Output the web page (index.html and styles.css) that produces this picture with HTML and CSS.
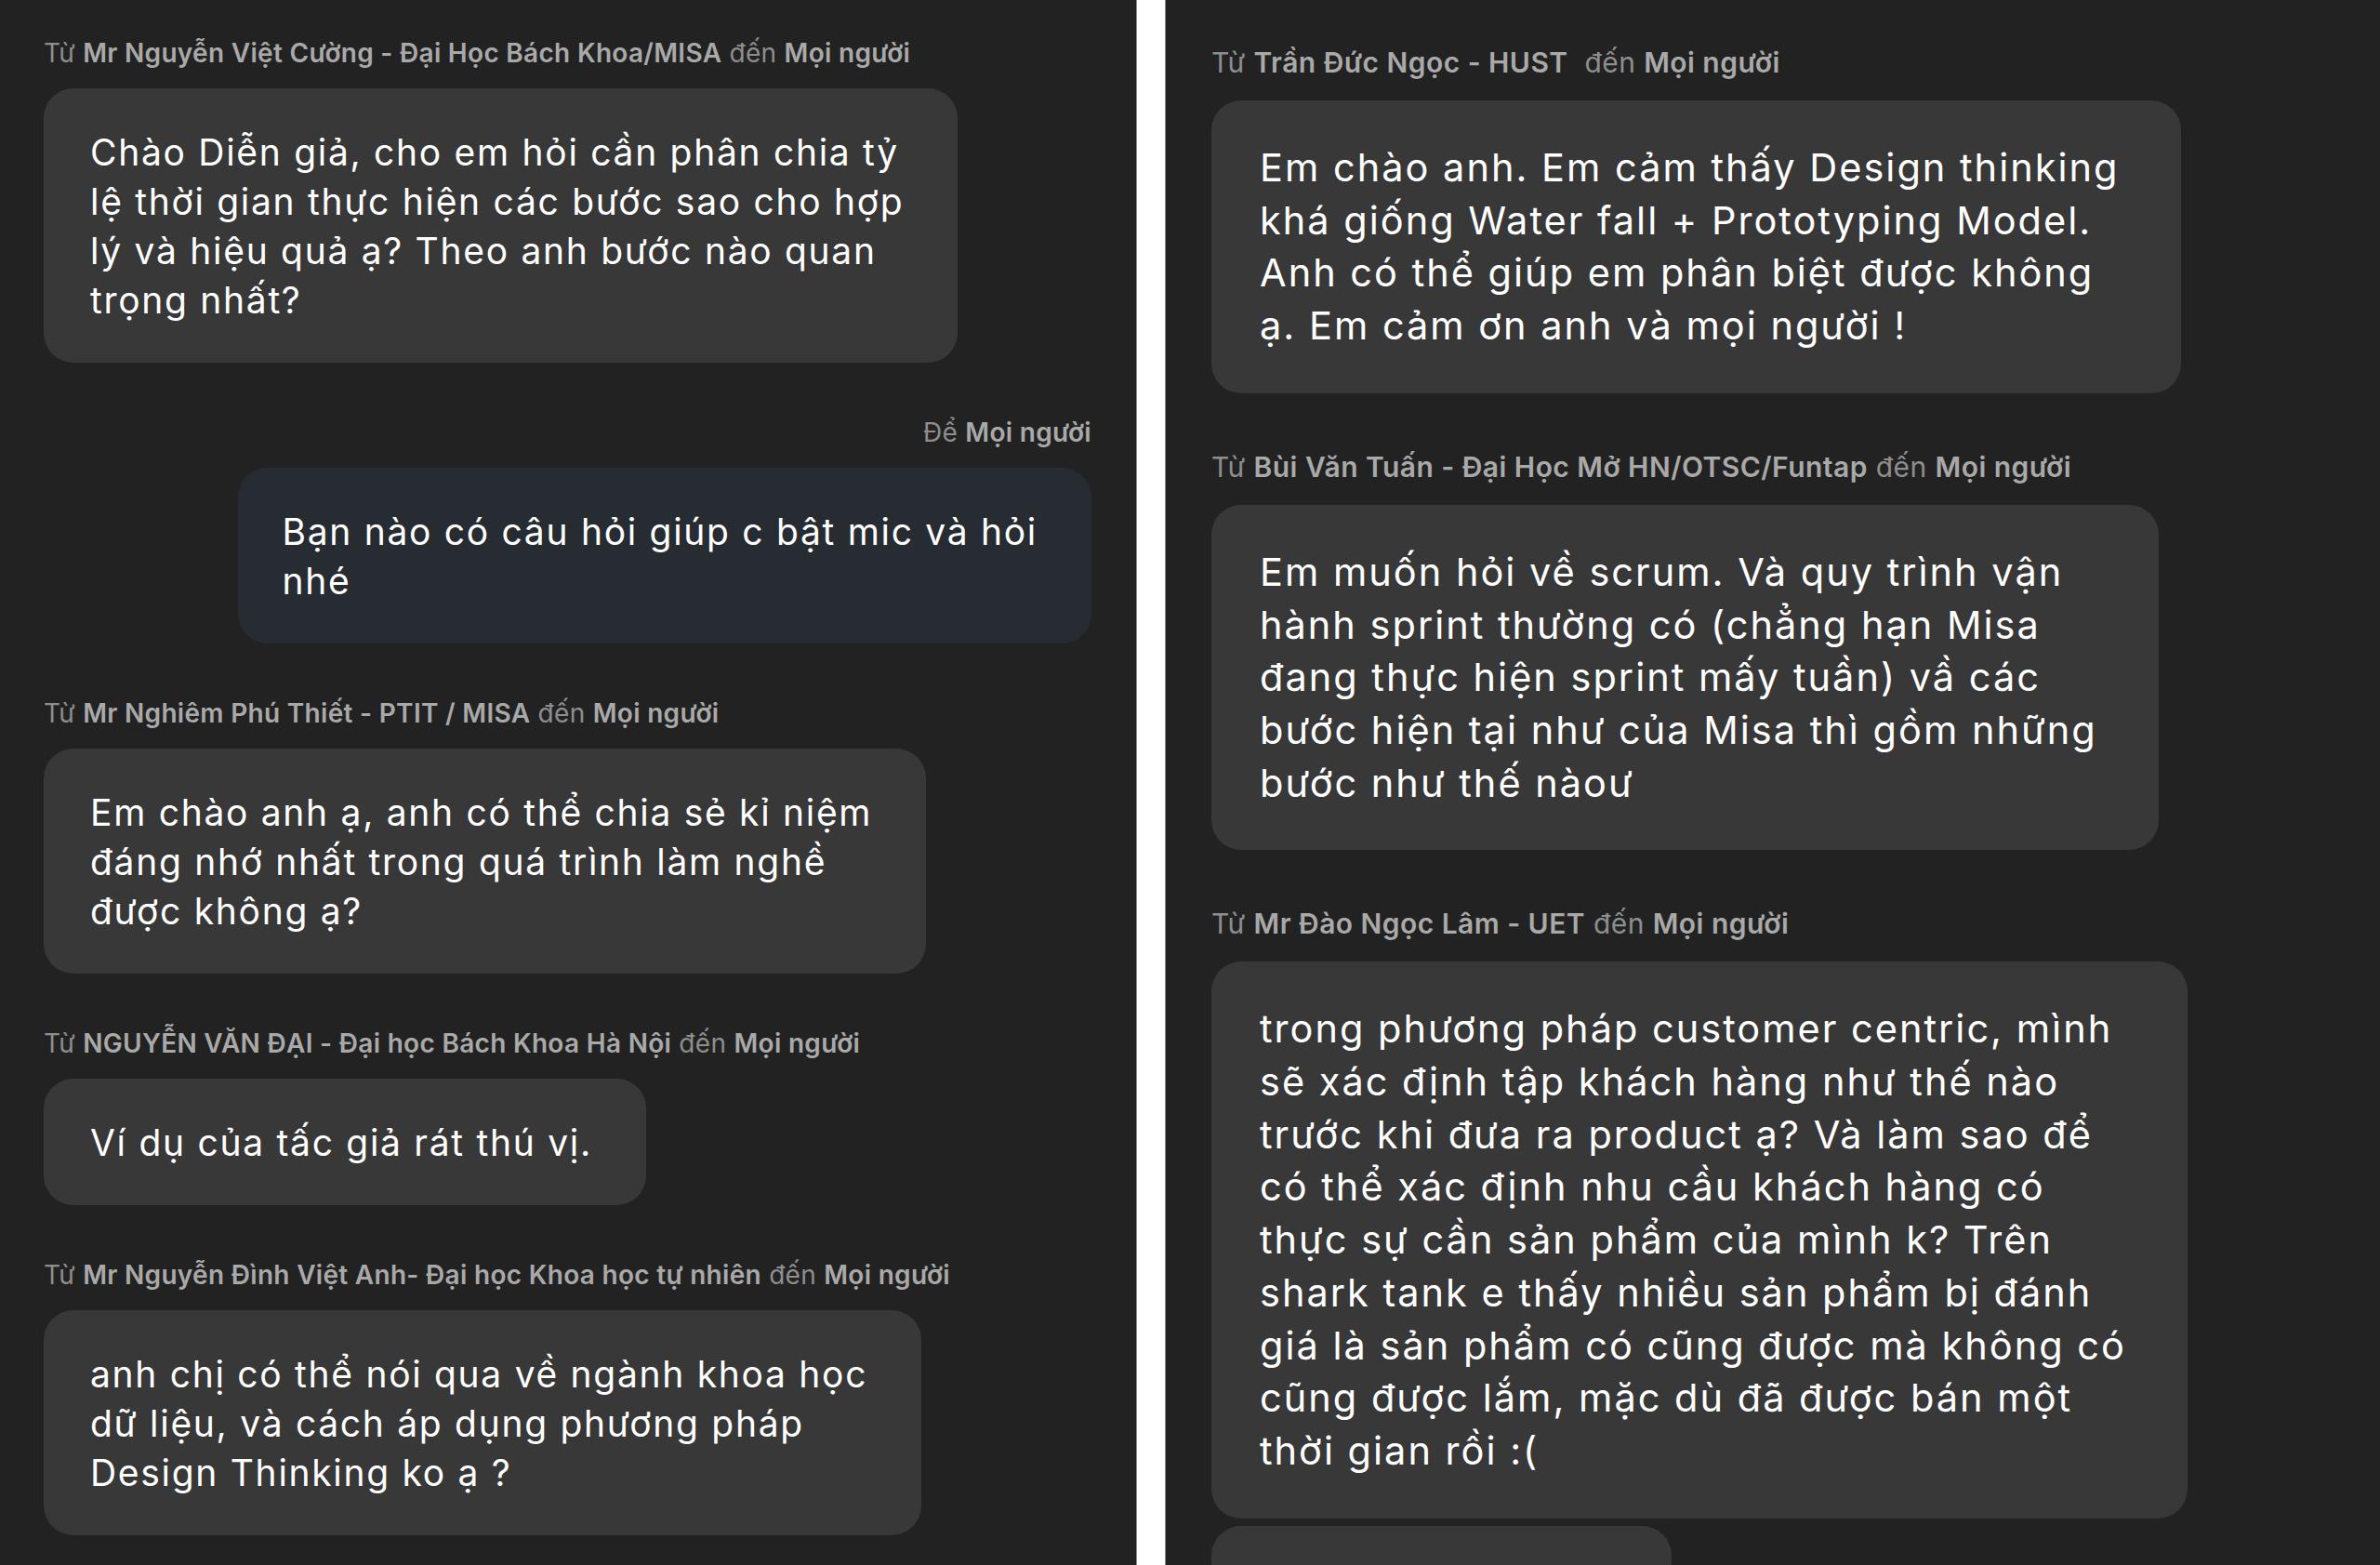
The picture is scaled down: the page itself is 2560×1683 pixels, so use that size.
FILE: index.html
```html
<!DOCTYPE html>
<html lang="vi">
<head>
<meta charset="utf-8">
<title>Chat</title>
<link rel="stylesheet" href="styles.css">
</head>
<body>
<div class="screen">
  <section class="panel panel-left">
    <div class="msg">
      <div class="meta">Từ <b>Mr Nguyễn Việt Cường - Đại Học Bách Khoa/MISA</b> đến <b>Mọi người</b></div>
      <div class="bubble">Chào Diễn giả, cho em hỏi cần phân chia tỷ<br>lệ thời gian thực hiện các bước sao cho hợp<br>lý và hiệu quả ạ? Theo anh bước nào quan<br>trọng nhất?</div>
    </div>
    <div class="msg msg-own">
      <div class="meta">Để <b>Mọi người</b></div>
      <div class="bubble bubble-own">Bạn nào có câu hỏi giúp c bật mic và hỏi<br>nhé</div>
    </div>
    <div class="msg">
      <div class="meta">Từ <b>Mr Nghiêm Phú Thiết - PTIT / MISA</b> đến <b>Mọi người</b></div>
      <div class="bubble">Em chào anh ạ, anh có thể chia sẻ kỉ niệm<br>đáng nhớ nhất trong quá trình làm nghề<br>được không ạ?</div>
    </div>
    <div class="msg">
      <div class="meta">Từ <b>NGUYỄN VĂN ĐẠI - Đại học Bách Khoa Hà Nội</b> đến <b>Mọi người</b></div>
      <div class="bubble">Ví dụ của tấc giả rát thú vị.</div>
    </div>
    <div class="msg">
      <div class="meta">Từ <b>Mr Nguyễn Đình Việt Anh- Đại học Khoa học tự nhiên</b> đến <b>Mọi người</b></div>
      <div class="bubble">anh chị có thể nói qua về ngành khoa học<br>dữ liệu, và cách áp dụng phương pháp<br>Design Thinking ko ạ ?</div>
    </div>
  </section>

  <section class="panel panel-right">
    <div class="msg">
      <div class="meta">Từ <b>Trần Đức Ngọc - HUST</b>&nbsp; đến <b>Mọi người</b></div>
      <div class="bubble">Em chào anh. Em cảm thấy Design thinking<br>khá giống Water fall + Prototyping Model.<br>Anh có thể giúp em phân biệt được không<br>ạ. Em cảm ơn anh và mọi người !</div>
    </div>
    <div class="msg">
      <div class="meta">Từ <b>Bùi Văn Tuấn - Đại Học Mở HN/OTSC/Funtap</b> đến <b>Mọi người</b></div>
      <div class="bubble">Em muốn hỏi về scrum. Và quy trình vận<br>hành sprint thường có (chẳng hạn Misa<br>đang thực hiện sprint mấy tuần) vầ các<br>bước hiện tại như của Misa thì gồm những<br>bước như thế nàoư</div>
    </div>
    <div class="msg">
      <div class="meta">Từ <b>Mr Đào Ngọc Lâm - UET</b> đến <b>Mọi người</b></div>
      <div class="bubble">trong phương pháp customer centric, mình<br>sẽ xác định tập khách hàng như thế nào<br>trước khi đưa ra product ạ? Và làm sao để<br>có thể xác định nhu cầu khách hàng có<br>thực sự cần sản phẩm của mình k? Trên<br>shark tank e thấy nhiều sản phẩm bị đánh<br>giá là sản phẩm có cũng được mà không có<br>cũng được lắm, mặc dù đã được bán một<br>thời gian rồi :(</div>
      <div class="bubble bubble-cut">&nbsp;</div>
    </div>
  </section>
</div>
</body>
</html>
```

FILE: styles.css
```css
* { box-sizing: border-box; }

html, body {
  margin: 0;
  padding: 0;
  background: #ffffff;
}

body {
  width: 2560px;
  height: 1683px;
  overflow: hidden;
  font-family: "Inter", "Noto Sans", "DejaVu Sans", sans-serif;
  -webkit-font-smoothing: antialiased;
}

.screen {
  display: flex;
  gap: 30px;
  height: 1683px;
}

.panel {
  background: #222222;
  height: 100%;
  overflow: hidden;
  display: flex;
  flex-direction: column;
}

.panel-left {
  width: 1223px;
  border-right: 1px solid #8a8a8a;
  padding: 40px 48px 0 47px;
}

.panel-right {
  flex: 1;
  border-left: 1px solid #8a8a8a;
  padding: 49px 40px 0 49px;
}

.msg {
  display: flex;
  flex-direction: column;
  align-items: flex-start;
}

.msg-own {
  align-items: flex-end;
}

.meta {
  color: #8e8e8e;
  white-space: nowrap;
}

.meta b {
  color: #a9a9a9;
  font-weight: 600;
}

.bubble {
  background: #383838;
  color: #ffffff;
  white-space: nowrap;
  border-radius: 32px;
}

.bubble-own {
  background: #272c33;
}

/* left panel scale */
.panel-left .msg + .msg { margin-top: 58px; }
.panel-left .meta {
  font-size: 28px;
  line-height: 34px;
  letter-spacing: 0.3px;
}
.panel-left .bubble {
  margin-top: 21px;
  font-size: 39px;
  line-height: 53px;
  letter-spacing: 1.7px;
  padding: 42px 58px 41px 50px;
}
.panel-left .bubble-own {
  padding-left: 47px;
}

/* right panel scale */
.panel-right .msg + .msg { margin-top: 61px; }
.panel-right .meta {
  font-size: 30px;
  line-height: 36px;
  letter-spacing: 0.45px;
}
.panel-right .bubble {
  margin-top: 23px;
  font-size: 41.5px;
  line-height: 56.7px;
  letter-spacing: 2px;
  padding: 44px 66px 44px 52px;
}

.panel-right .bubble-cut {
  margin-top: 8px;
  width: 495px;
  height: 140px;
}
```
